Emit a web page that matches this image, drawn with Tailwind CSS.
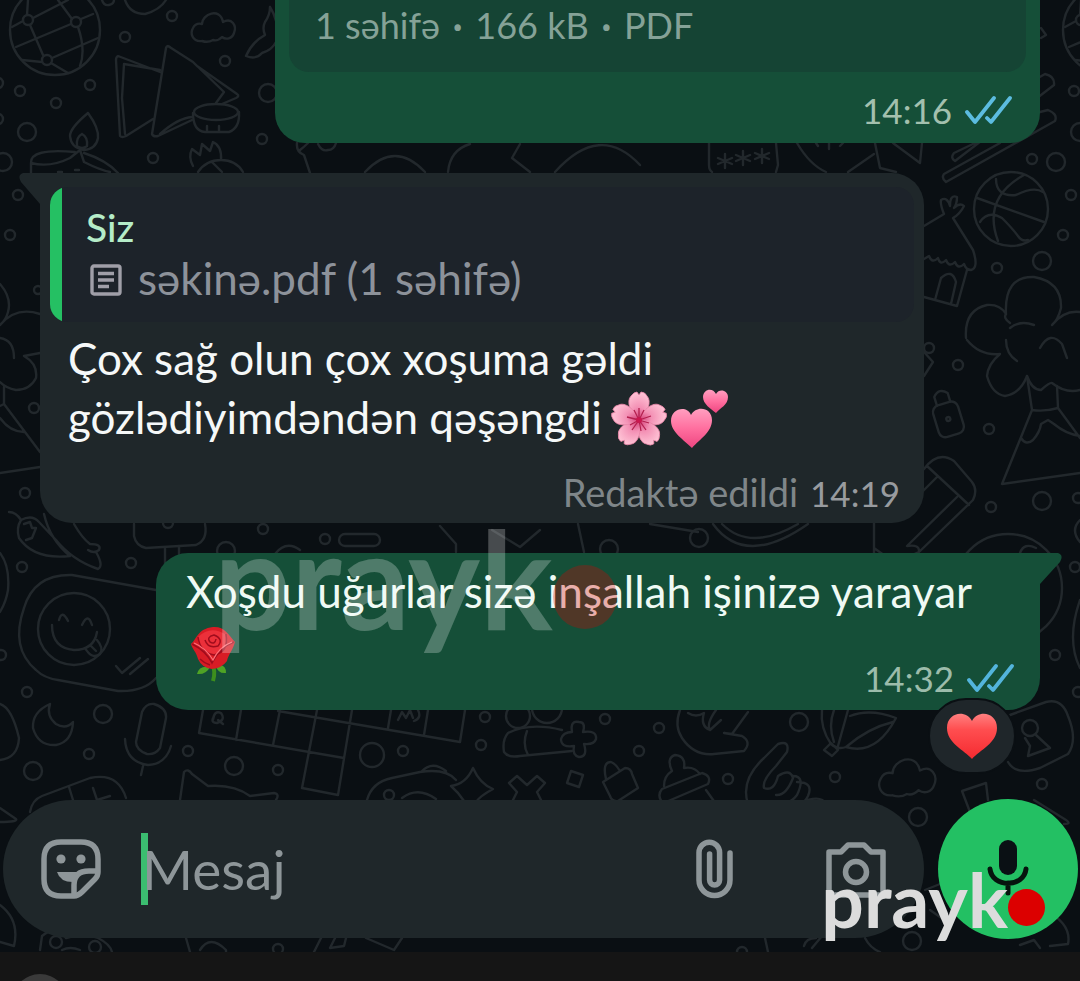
<!DOCTYPE html>
<html lang="az">
<head>
    <meta charset="UTF-8">
    <meta name="viewport" content="width=device-width, initial-scale=1.0">
    <title>Chat</title>
    <script src="https://cdn.jsdelivr.net/npm/@tailwindcss/browser@4"></script>
</head>
<body class="relative flex flex-col min-h-screen overflow-x-hidden bg-[#0a0f13] font-['Lato','Open_Sans',sans-serif]">

    <!-- Wallpaper doodles -->
    <svg class="absolute inset-0 w-full h-full" viewBox="0 0 1080 981" preserveAspectRatio="xMidYMid slice" fill="none" stroke="#22282c" stroke-width="2.4" stroke-linecap="round" stroke-linejoin="round" aria-hidden="true">
        <!-- dots -->
        <circle cx="172" cy="16" r="5"/><circle cx="125" cy="37" r="5"/><circle cx="225" cy="61" r="5"/><circle cx="268" cy="93" r="9"/>
        <circle cx="20" cy="91" r="5"/><circle cx="90" cy="85" r="5"/><circle cx="56" cy="103" r="5"/><circle cx="27" cy="132" r="9"/>
        <circle cx="3" cy="162" r="9"/><circle cx="262" cy="139" r="5"/><circle cx="153" cy="158" r="5"/><circle cx="18" cy="195" r="5"/>
        <circle cx="10" cy="235" r="5"/><circle cx="-2" cy="83" r="5"/><circle cx="-2" cy="119" r="5"/><circle cx="38" cy="290" r="4"/>
        <circle cx="34" cy="408" r="5"/><circle cx="25" cy="493" r="5"/><circle cx="263" cy="529" r="5"/><circle cx="168" cy="523" r="5"/>
        <circle cx="1074" cy="91" r="5"/><circle cx="1080" cy="132" r="9"/><circle cx="1032" cy="159" r="5"/><circle cx="1056" cy="162" r="9"/>
        <circle cx="1071" cy="195" r="5"/><circle cx="1063" cy="235" r="5"/><circle cx="1042" cy="261" r="9"/><circle cx="997" cy="268" r="5"/>
        <circle cx="929" cy="348" r="5"/><circle cx="958" cy="365" r="5"/><circle cx="989" cy="429" r="5"/><circle cx="991" cy="507" r="5"/>
        <circle cx="1042" cy="501" r="9"/><circle cx="1078" cy="498" r="5"/><circle cx="609" cy="549" r="9"/><circle cx="699" cy="538" r="9"/>
        <circle cx="226" cy="551" r="9"/><circle cx="325" cy="539" r="5"/><rect x="339" y="534" width="41" height="12" rx="6"/>
        <circle cx="799" cy="722" r="9"/><circle cx="659" cy="728" r="5"/><circle cx="728" cy="779" r="5"/><circle cx="835" cy="777" r="5"/>
        <circle cx="1055" cy="655" r="5"/><circle cx="1075" cy="567" r="5"/><circle cx="1042" cy="784" r="5"/><circle cx="1078" cy="692" r="5"/>
        <circle cx="22" cy="567" r="5"/><circle cx="131" cy="563" r="5"/><circle cx="1" cy="655" r="5"/><circle cx="27" cy="692" r="5"/>
        <circle cx="103" cy="714" r="9"/><circle cx="89" cy="754" r="5"/><circle cx="188" cy="751" r="5"/><circle cx="33" cy="771" r="9"/>
        <circle cx="234" cy="766" r="9"/><circle cx="278" cy="770" r="5"/><circle cx="372" cy="755" r="12"/><circle cx="403" cy="751" r="5"/>
        <circle cx="485" cy="717" r="5"/><circle cx="481" cy="745" r="5"/><circle cx="605" cy="719" r="5"/><circle cx="639" cy="751" r="5"/>
        <circle cx="918" cy="817" r="9"/><circle cx="912" cy="941" r="9"/><circle cx="56" cy="942" r="6"/><circle cx="95" cy="947" r="6"/>
        <circle cx="278" cy="949" r="5"/><circle cx="742" cy="952" r="5"/>
        <!-- globes -->
        <g id="globe">
            <circle cx="55" cy="30" r="45"/><circle cx="28" cy="20" r="5"/><circle cx="76" cy="22" r="5"/><circle cx="47" cy="60" r="5"/>
            <path d="M27 15 28 0M33 18 68 0M71 24 16 47M23 21 12 27M30 25 43 55M72 19 58 0M81 19 93 14M78 27Q86 50 80 66M52 58 98 38M42 62 22 60M51 63 68 73"/>
        </g>
        <use href="#globe" x="1053"/>
        <path d="M125 0Q130 14 145 14Q160 10 166 0M102 0Q104 6 109 5Q114 4 114 0"/>
        <path id="cloud" d="M202 41C192 42 190 33 193 28C195 24 198 23 202 24C202 14 220 7 223 22C232 17 237 26 234 33C232 39 226 40 222 37C219 40 216 41 213 40Q208 43 202 41"/>
        <path d="M270 7Q274 13 276 21M270 7Q270 15 265 22Q262 28 265 35Q252 42 246 56Q256 60 262 53Q272 50 276 42"/>
        <!-- folded paper and drum -->
        <path d="M160 72 118 56Q116 57 116 60L120 136Q122 138 126 136L153 119M160 70 124 64 122 98 125 134M168 46 193 62 197 66 237 94Q240 96 236 98L222 104M166 48 152 134Q153 137 158 136L192 120M166 48Q167 45 170 47M193 62 224 92 216 103M160 134Q178 118 192 117"/>
        <ellipse cx="216" cy="112" rx="22" ry="8"/>
        <path d="M193 113Q193 131 205 132H229Q240 128 239 112M207 126V131M219 126V131"/>
        <!-- oil lamp -->
        <path d="M88 113Q99 128 98 138Q96 149 84 150Q71 148 70 136Q70 128 88 113M82 134Q76 137 77 146Q82 150 87 146Q88 137 82 134M75 152Q30 148 31 163Q50 168 70 158L80 150 84 162Q100 170 110 172M84 153Q106 160 118 173M31 163V173M58 172H62M75 170H79"/>
        <!-- pineapple -->
        <path d="M193 166Q188 157 192 149L200 155 202 144 210 151 213 142Q222 146 221 160Q236 160 243 172M198 172Q206 160 221 160M212 162 222 172"/>
        <path d="M297 143Q296 152 304 155L310 173M300 150Q304 147 308 143M318 144Q322 152 328 150Q334 150 336 143M365 172Q395 140 425 172M448 172Q450 150 470 144M520 144 512 158 530 172M555 172Q600 122 640 165"/>
        <!-- password bubble, gem, stars -->
        <path d="M709 143V165Q709 170 712 172M776 143 778 165 776 172M725 154V168M718 158 732 164M732 158 718 164M743 151V165M736 155 750 161M750 155 736 161M762 149V163M755 153 769 159M769 153 755 159M797 143Q810 165 826 172M816 143 818 146M829 143V149M840 146 843 143M875 143 880 168 896 172M874 154 848 172M893 143 920 163 922 143"/>
        <!-- chopsticks -->
        <path d="M1038 78 1045 74Q1055 76 1054 85L955 161Q950 158 954 153L975 143M1040 112 1048 110Q1058 114 1055 121L946 182Q941 178 944 174L1000 143M1041 28 1046 35 1041 38"/>
        <!-- basketball -->
        <circle cx="1011" cy="209" r="37"/>
        <path d="M977 198 1044 222M1024 175Q982 198 998 241M996 179Q996 197 1016 195Q1034 186 1043 192M980 222Q988 210 1002 218Q1012 228 1018 236Q1022 242 1028 240"/>
        <!-- hut -->
        <path d="M924 226 944 214Q940 204 941 200Q947 196 950 206Q950 194 957 197Q957 204 954 208Q960 202 964 206Q960 214 953 218L973 250Q979 268 971 270Q966 270 964 264Q958 270 955 262Q949 268 946 260Q940 266 938 258Q932 264 929 256L924 259M967 270 957 306 924 297M935 300 941 278Q952 268 956 282L951 304"/>
        <!-- cloud over volcano, continued at the left edge -->
        <path d="M966 338Q964 310 987 305Q1000 304 1006 314Q1004 276 1034 277Q1062 282 1061 308Q1058 320 1052 325Q1064 310 1080 312M1010 323Q1003 318 1006 314M1010 328Q1020 320 1034 325M967 340Q980 356 1000 354Q988 364 987 376Q992 394 1005 396Q1020 394 1027 376Q1032 390 1041 390 1050 382 1052 383Q1066 394 1080 390M1006 340Q1006 354 1017 361M1040 348Q1050 330 1062 344L1067 358"/>
        <path d="M1027 376 1032 410Q1044 412 1058 408L1057 386M1032 410 1002 484 1080 473M1058 408 1080 438M1021 438Q1026 446 1033 440Q1040 432 1041 424L1048 420 1054 424Q1066 434 1080 436"/>
        <path d="M0 284Q12 298 8 312 6 320 0 325 16 306 40 314M0 338Q14 340 14 358M24 356 40 353M24 356Q38 364 36 378 30 390 16 390 6 388 0 382M4 387V404L40 452M0 406 4 404M0 418Q10 432 24 432M0 473 40 467"/>
        <!-- padlock -->
        <g transform="rotate(-17 948 418)"><rect x="935" y="403" width="26" height="33" rx="7"/><path d="M941 403V394Q948 386 955 394V403"/><circle cx="948" cy="419" r="2"/></g>
        <path d="M924 352 933 362 924 376"/>
        <!-- pencil -->
        <path d="M924 469Q938 450 954 461L972 482Q978 490 973 500L919 552Q905 560 874 558V523M927 466 969 505M938 476 920 494M957 497 907 546Q920 544 919 552M874 548 888 558M650 524 698 532M713 524Q745 568 808 524M722 524Q750 552 798 524"/>
        <path d="M578 524 584 552M0 553Q10 566 8 590 6 602 0 612M492 530 520 547 540 530M440 526 456 544V552M165 548V566M179 546V560M275 554Q286 540 300 550"/>
        <!-- chilli peppers -->
        <path d="M9 512Q16 512 21 520Q16 528 19 538Q34 560 70 556M21 520Q32 514 39 522L56 540Q72 560 98 569Q104 566 96 552M24 524 30 522 32 528 36 528 32 538 26 540M44 514Q50 540 70 556M74 524Q82 538 90 544Q102 544 99 550Q94 554 88 550"/>
        <!-- chair -->
        <path d="M134 524V536Q136 546 146 548L196 545Q208 540 205 524"/>
        <circle cx="1008" cy="588" r="54"/><path d="M1020 553Q1024 542 1036 548M1080 600Q1066 640 1080 668M1080 542Q1070 530 1080 520"/>
        <!-- winking sticker bubble -->
        <path d="M156 590 72 575Q34 574 24 608 10 648 36 670 44 678 58 680L118 691Q144 692 156 678"/>
        <circle cx="74" cy="629" r="36"/>
        <path d="M59 620Q62 609 68 621M82 625Q88 612 92 625M52 625Q52 648 74 650Q94 650 97 632M85 648Q92 660 100 654Q104 648 97 640M90 645 96 651M116 666 122 673 140 658M130 674 148 659"/>
        <!-- moon -->
        <path d="M50 704Q32 712 33 728Q38 746 56 745Q72 742 73 722Q66 730 56 724Q46 716 50 704"/>
        <path d="M0 704Q12 708 19 738Q18 758 0 760"/>
        <!-- microphone -->
        <path d="M142 712Q146 703 154 704Q167 708 166 718L160 748Q155 755 147 754Q136 750 136 742ZM125 739Q126 762 148 765Q166 764 171 746M143 766 141 775"/>
        <path d="M30 812Q32 800 42 796L90 778Q118 772 126 798M69 787 73 800M93 788 97 800 110 796M0 808 16 819Q18 822 0 822"/>
        <!-- crossword -->
        <path d="M203 710 199 733 344 758M241 710 236 740M280 710 273 745M278 711 460 742 465 710M317 710 302 788 338 795 352 710M391 710 388 728M428 710 424 735M213 720Q214 710 221 713Q226 720 217 723Q211 723 213 718M218 720 223 724M398 720 402 712 406 718 410 710 413 718M418 710Q422 718 414 721"/>
        <!-- cat -->
        <path d="M180 800 184 772Q188 768 192 774L208 786Q234 784 250 796L274 793Q280 794 276 800"/>
        <!-- toad, star, cross -->
        <path d="M367 800Q372 782 392 778L420 772Q446 768 456 780M421 772Q432 760 446 771M402 798Q418 786 436 799M473 768Q480 784 493 789Q480 796 476 802M473 768Q466 784 451 786Q458 792 464 801M513 800 517 792 509 783 517 776 527 785 537 776 545 783 537 792 541 800"/>
        <circle cx="389" cy="795" r="5"/><circle cx="518" cy="716" r="12"/><circle cx="547" cy="708" r="15"/>
        <path d="M562 730Q530 722 508 733Q502 740 504 752Q508 758 520 756L572 751M527 731Q522 744 528 755"/>
        <path d="M572 732Q570 720 579 722Q586 722 583 732Q597 730 596 739Q594 745 584 744Q588 757 579 757Q572 755 574 746Q561 748 561 739Q563 732 572 732"/>
        <path d="M571 771 583 775 579 787 567 783Z"/>
        <!-- bag -->
        <path d="M603 782 625 768Q631 768 632 774L638 788 618 801Q612 802 610 796ZM606 779Q602 762 611 762 616 764 620 771"/>
        <!-- hand -->
        <path d="M680 710Q674 726 682 738Q694 756 714 754L744 751Q752 742 742 736L724 733 732 734 748 712M688 713Q696 718 704 713Q700 726 710 730L721 720M716 710Q706 724 710 730"/>
        <!-- beanie -->
        <path d="M664 804Q656 796 662 789L702 773Q712 776 708 784L666 802M664 786Q664 776 672 771Q666 758 675 755Q686 756 684 768Q694 766 700 774M706 790 716 804"/>
        <!-- thumbs -->
        <path d="M748 804Q740 780 764 758L778 744Q790 740 787 752L776 766Q762 780 764 788Q774 792 778 776Q790 768 793 778 786 796 776 795M793 776Q806 776 797 795Q790 804 784 802M797 782Q814 782 808 796 804 804 800 802M808 800Q822 796 826 804"/>
        <!-- balloon -->
        <path d="M822 710Q820 728 831 744 838 750 846 747 876 756 896 718Q870 708 850 716M834 710Q828 726 834 742M848 710 838 746M893 722Q868 728 846 747M824 750 831 743 838 750 832 756Z"/>
        <use href="#cloud" transform="translate(630 742) scale(1.3)" stroke-width="1.8"/>
        <!-- lock tile -->
        <path d="M1010 715 1046 702Q1062 698 1068 716 1078 740 1068 754L1040 768Q1016 776 1008 762M1025 738 1030 746 1028 756 1050 748 1036 735"/>
        <circle cx="1030" cy="728" r="8"/>
        <path d="M970 812 962 791 986 783 988 800M1034 800 1066 820Q1072 824 1064 824M0 905Q20 920 14 946L0 942M40 950 42 936Q56 924 66 938Q84 932 98 938Q110 944 112 952M62 950Q70 946 80 950M186 938 190 952M200 950Q210 934 226 950V952M314 952 322 936H336L330 948 344 946 346 938M366 938 394 950 402 938M1045 910Q1072 924 1068 944L1050 946M1020 945 1034 940 1040 948M925 890 950 880M930 910 950 924M804 946Q806 938 816 938M822 936 812 948M765 938 768 952M865 938Q870 948 880 952"/>
    </svg>

    <main class="relative flex-1 flex flex-col gap-[30px] px-10">
        <!-- Document message -->
        <article class="ml-[235px] h-[143px] rounded-b-[30px] bg-[#154f38] px-[14px]">
            <p class="h-[72px] rounded-b-[20px] bg-[#154434] px-[26px] text-[36px] leading-[50px] text-[#85a297]">1 səhifə <span class="px-[3px] font-['Roboto'] text-[32px]">•</span> 166 kB <span class="px-[3px] font-['Roboto'] text-[32px]">•</span> PDF</p>
            <div class="flex items-center justify-end gap-3 h-[76px] pr-[14px] text-[35px] text-[#a3c0ae]">
                <time>14:16</time>
                <svg class="w-12 h-[30px]" viewBox="0 0 48 30" fill="none" stroke="#5cbce0" stroke-width="3.8" stroke-linecap="round" stroke-linejoin="round" role="img" aria-label="Oxundu">
                    <path d="M3 17 11 27 30 3M23 23 27 27 46 3"/>
                </svg>
            </div>
        </article>

        <!-- Incoming reply -->
        <article class="relative mr-[116px] rounded-[32px] bg-[#1f272a] px-[10px] pt-[14px] pb-[7px]">
            <svg class="absolute -left-[21px] top-0 w-[60px] h-[34px]" viewBox="0 0 60 34" fill="#1f272a" aria-hidden="true"><path d="M4 0H60V34H21V31L2 9Q-2 2 4 0Z"/></svg>
            <blockquote class="relative flex overflow-hidden rounded-[18px] bg-[#1d232a] h-[135px]">
                <span class="w-3 bg-[#25c063]"></span>
                <div class="pl-6 pt-4">
                    <p class="text-[39px] leading-[48px] font-medium text-[#b5ecc8]">Siz</p>
                    <p class="flex items-center gap-4 text-[44px] leading-[54px] text-[#8d929a]">
                        <svg class="ml-1 mt-1 w-8 h-8" viewBox="0 0 32 32" fill="none" stroke="#a09fa8" stroke-width="3.4" stroke-linejoin="round" aria-hidden="true">
                            <rect x="2" y="2" width="28" height="28" rx="2"/><path d="M8 9.500H24M8 16H24M8 22.500H19"/>
                        </svg>
                        <span>səkinə.pdf (1 səhifə)</span>
                    </p>
                </div>
            </blockquote>
            <p class="pl-[18px] pt-[7px] text-[44px] leading-[59px] text-[#f5f8f8]">Çox sağ olun çox xoşuma gəldi<br>gözlədiyimdəndən qəşəngdi<svg class="inline-block align-middle ml-2 -mt-3 -mb-1 w-[118px] h-[60px]" viewBox="0 0 118 60" role="img" aria-label="🌸💕">
                    <defs>
                        <radialGradient id="petal" cx=".5" cy=".9" r=".9"><stop offset="0" stop-color="#d8487f"/><stop offset=".4" stop-color="#f391b5"/><stop offset="1" stop-color="#ffc4d6"/></radialGradient>
                        <linearGradient id="pink" x2="0" y2="1"><stop offset="0" stop-color="#ff9fc0"/><stop offset=".5" stop-color="#ff6f9f"/><stop offset="1" stop-color="#ee4580"/></linearGradient>
                        <path id="leaf" d="M29 31C20 24 16 12 21 7Q24 3 27 3L29 6 31 3Q35 3 37 7C42 12 38 24 29 31Z"/>
                    </defs>
                    <g fill="url(#petal)" stroke="#e987a9" stroke-width=".8">
                        <use href="#leaf"/><use href="#leaf" transform="rotate(72 29 31)"/><use href="#leaf" transform="rotate(144 29 31)"/><use href="#leaf" transform="rotate(216 29 31)"/><use href="#leaf" transform="rotate(288 29 31)"/>
                    </g>
                    <path d="M29 31V19M29 31 24 21M29 31 34 21M29 31 41 27M29 31 39 34M29 31 36 41M29 31 31 42M29 31 22 41M29 31 20 36M29 31 17 28" stroke="#b3214f" stroke-width="1.3"/>
                    <circle cx="29" cy="31" r="3" fill="#c9184f"/>
                    <path d="M82 59C74 51 61 43 61 32C61 19 77 16 81 26C86 16 102 18 102 31C102 43 90 50 82 59Z" fill="url(#pink)"/>
                    <path d="M106 24C101 20 93 15 93 8C93 0 103-2 106 5C109-1 118 1 118 8C118 16 110 19 106 24Z" fill="url(#pink)"/>
                </svg></p>
            <div class="flex items-baseline justify-end gap-3 pt-[22px] pr-[14px] leading-[46px]">
                <span class="text-[38px] text-[#7f8689]">Redaktə edildi</span>
                <time class="text-[35px] text-[#989b9f]">14:19</time>
            </div>
        </article>

        <!-- Outgoing message with reaction -->
        <article class="relative ml-[116px] h-[157px] rounded-[32px] bg-[#154f38] pl-[30px] pt-[9px]">
            <svg class="absolute -right-[22px] top-0 w-[60px] h-[34px]" viewBox="0 0 60 34" fill="#154f38" aria-hidden="true"><path d="M56 0H0V34H38V31L58 9Q62 2 56 0Z"/></svg>
            <p class="relative text-[44px] leading-[59px] text-[#effaf4] whitespace-nowrap">Xoşdu uğurlar sizə inşallah işinizə yarayar<br><svg class="inline-block align-top mt-1 w-[54px] h-[58px]" viewBox="0 0 54 58" role="img" aria-label="🌹">
                    <path d="M26 38Q30 46 27 56" stroke="#3d8f1d" stroke-width="4" fill="none"/>
                    <path d="M11 49Q13 40 24 42Q20 50 11 49ZM40 48Q40 38 30 41Q32 49 40 48Z" fill="#4fa325"/>
                    <path d="M27 2C38 1 42 9 49 17C47 25 42 30 41 36Q36 43 26 44 16 43 12 34C10 26 6 24 5 19 11 14 11 4 27 2Z" fill="#d81c25"/>
                    <path d="M12 12Q24 0 39 9Q43 26 28 29Q12 28 12 12Z" fill="#ec303a"/>
                    <path d="M12 12Q14 27 28 30 43 27 40 9M6 19Q20 26 26 38Q34 22 48 17M19 15Q22 24 32 21 38 14 28 10 20 12 24 17 29 20 30 14M14 34Q18 38 24 40" fill="none" stroke="#a00c1c" stroke-width="1.500"/>
                    <path d="M8 18Q20 23 27 35Q33 22 46 17" fill="none" stroke="#ff7078" stroke-width="1.200"/>
                </svg></p>
            <div class="absolute right-[26px] bottom-[9px] flex items-center gap-3 text-[35px] leading-[46px] text-[#9cbcab]">
                <time>14:32</time>
                <svg class="w-12 h-[30px]" viewBox="0 0 48 30" fill="none" stroke="#53b4dc" stroke-width="3.8" stroke-linecap="round" stroke-linejoin="round" role="img" aria-label="Oxundu">
                    <path d="M3 17 11 27 30 3M23 23 27 27 46 3"/>
                </svg>
            </div>
            <button type="button" aria-label="Reaksiya" class="absolute right-[24px] -bottom-[64px] flex items-center justify-center w-[88px] h-[76px] rounded-full border-2 border-[#0a0f13] bg-[#1f262a]">
                <svg class="w-[52px] h-[46px]" viewBox="0 0 52 46" aria-hidden="true">
                    <defs><linearGradient id="red" x2="0" y2="1"><stop offset="0" stop-color="#ff8080"/><stop offset=".35" stop-color="#ff4e50"/><stop offset="1" stop-color="#f52a30"/></linearGradient></defs>
                    <path d="M26 46C18 37 1 30 1 15C1-1 20-4 26 8C32-4 51-1 51 15C51 30 34 37 26 46Z" fill="url(#red)"/>
                </svg>
            </button>
        </article>

        <!-- Large translucent watermark -->
        <div class="absolute left-[214px] top-[510px] flex items-center text-[136px] leading-[136px] font-bold text-white/25 pointer-events-none" aria-hidden="true">
            prayk<span class="w-16 h-16 mt-[38px] rounded-full bg-[#dc0000]/30"></span>
        </div>
    </main>

    <!-- Composer -->
    <form class="relative flex items-center gap-[14px] pl-[3px] pr-[2px] pb-[13px]">
        <div class="flex flex-1 items-center min-w-0 h-[138px] rounded-full bg-[#1f272a] pl-[38px] pr-[38px] text-[#8e9699]">
            <button type="button" aria-label="Stikerlər" class="shrink-0">
                <svg class="w-[60px] h-[60px]" viewBox="0 0 60 60" fill="none" stroke="currentColor" stroke-width="5.500" stroke-linejoin="round">
                    <path d="M20 3H40Q57 3 57 20V33Q57 37 54 40L41 53Q37 57 33 57H20Q3 57 3 40V20Q3 3 20 3Z"/>
                    <path d="M56 32H48Q33 32 33 46V56"/>
                    <g fill="currentColor" stroke="none"><circle cx="20" cy="20" r="4.600"/><circle cx="40" cy="20" r="4.600"/><path d="M16 33H40L32 43Q19 43 16 33Z"/></g>
                </svg>
            </button>
            <span class="ml-10 w-[7px] h-[72px] shrink-0 bg-[#3bbd70]"></span>
            <input type="text" aria-label="Mesaj" placeholder="Mesaj" class="-ml-[6px] flex-1 min-w-0 bg-transparent text-[55px] leading-[72px] outline-none placeholder:text-[#8e9699]">
            <button type="button" aria-label="Fayl əlavə et" class="shrink-0 mr-[92px]">
                <svg class="w-[38px] h-[60px]" viewBox="0 0 38 60" fill="none" stroke="currentColor" stroke-width="5.500" stroke-linecap="round">
                    <path d="M34 14V41A15.500 15.500 0 0 1 3 41V13.500A10.300 10.300 0 0 1 23.600 13.500V41A5 5 0 0 1 13.600 41V15"/>
                </svg>
            </button>
            <button type="button" aria-label="Kamera" class="shrink-0">
                <svg class="w-[60px] h-[60px]" viewBox="0 0 60 60" fill="none" stroke="currentColor" stroke-width="5.500" stroke-linejoin="round">
                    <path d="M3 13H15L22 6H38L45 13H57V56H3Z"/><circle cx="30" cy="33" r="10.500"/>
                </svg>
            </button>
        </div>
        <button type="button" aria-label="Səs yaz" class="flex items-center justify-center shrink-0 w-[140px] h-[140px] rounded-full bg-[#23c063]">
            <svg class="w-[44px] h-[58px]" viewBox="0 0 44 58" fill="none" stroke="#06140e" stroke-width="5" stroke-linecap="round">
                <rect x="13" y="0" width="18" height="35" rx="9" fill="#0a1014" stroke="none"/><path d="M4 29C6 48 38 48 40 29M22 43V53"/>
            </svg>
        </button>
    </form>

    <!-- System navigation strip -->
    <nav class="relative h-[29px] overflow-hidden bg-[#151515]" aria-label="Sistem">
        <span class="block ml-3 mt-[22px] w-14 h-14 rounded-full bg-[#3a3a3a]"></span>
    </nav>

    <!-- Corner watermark -->
    <div class="absolute right-[35px] bottom-[46px] flex items-center text-[75px] leading-[72px] font-bold text-[#dcdcdc] pointer-events-none" aria-hidden="true">
        prayk<span class="w-[37px] h-[37px] mt-[17px] rounded-full bg-[#dc0000]"></span>
    </div>
</body>
</html>
